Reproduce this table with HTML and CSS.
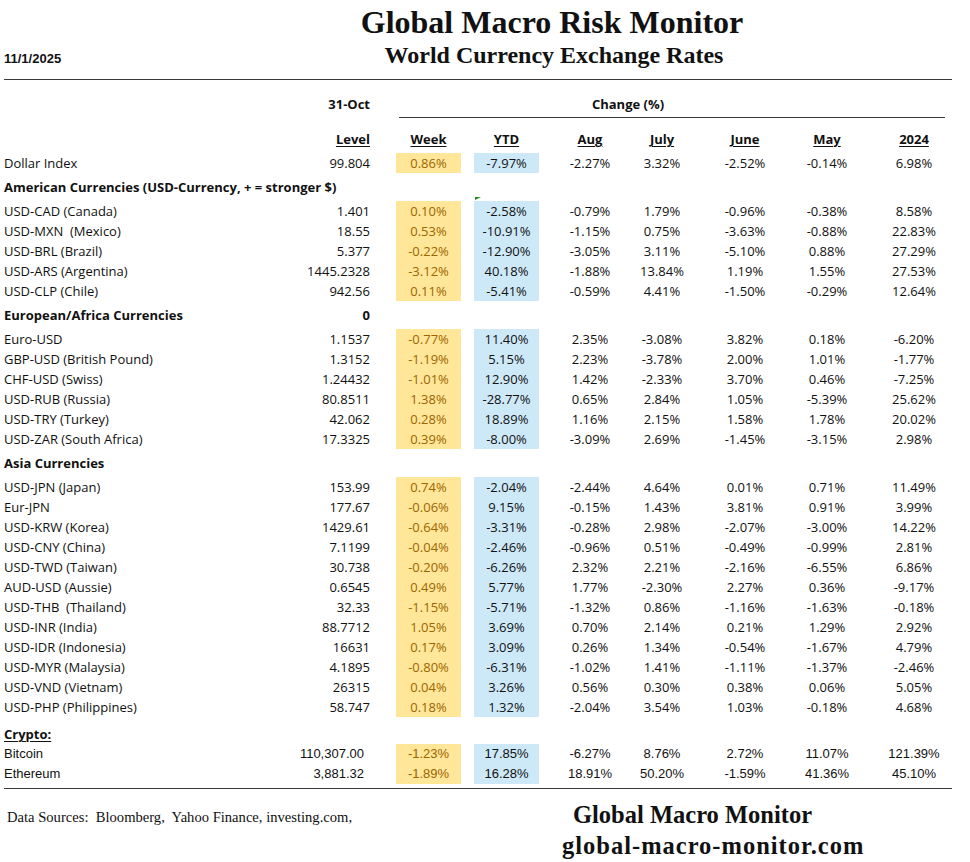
FILE: index.html
```html
<!DOCTYPE html>
<html>
<head>
<meta charset="utf-8">
<link rel="stylesheet" href="styles.css">
</head>
<body>
<div class="page">
  <header class="top">
    <div class="date">11/1/2025</div>
    <div class="titles">
      <h1 class="title">Global Macro Risk Monitor</h1>
      <h2 class="subtitle">World Currency Exchange Rates</h2>
    </div>
  </header>

  <section class="tbl">
    <div class="row head1">
      <div class="lvl b">31-Oct</div>
      <div class="change b">Change (%)</div>
      <div class="change-rule"></div>
    </div>
    <div class="row head2">
      <div class="lvl b u">Level</div>
      <div class="wk plain b u">Week</div>
      <div class="ytd plain b u">YTD</div>
      <div class="m1 b u">Aug</div>
      <div class="m2 b u">July</div>
      <div class="m3 b u">June</div>
      <div class="m4 b u">May</div>
      <div class="m5 b u">2024</div>
    </div>

    <div class="row"><div class="lbl">Dollar Index</div><div class="lvl">99.804</div><div class="wk">0.86%</div><div class="ytd">-7.97%</div><div class="m1">-2.27%</div><div class="m2">3.32%</div><div class="m3">-2.52%</div><div class="m4">-0.14%</div><div class="m5">6.98%</div></div>

    <div class="row sect"><div class="lbl b">American Currencies (USD-Currency, + = stronger $)</div></div>
    <div class="row"><div class="lbl">USD-CAD (Canada)</div><div class="lvl">1.401</div><div class="wk">0.10%</div><div class="ytd flagged">-2.58%<span class="err-flag"></span></div><div class="m1">-0.79%</div><div class="m2">1.79%</div><div class="m3">-0.96%</div><div class="m4">-0.38%</div><div class="m5">8.58%</div></div>
    <div class="row"><div class="lbl">USD-MXN&nbsp; (Mexico)</div><div class="lvl">18.55</div><div class="wk">0.53%</div><div class="ytd">-10.91%</div><div class="m1">-1.15%</div><div class="m2">0.75%</div><div class="m3">-3.63%</div><div class="m4">-0.88%</div><div class="m5">22.83%</div></div>
    <div class="row"><div class="lbl">USD-BRL (Brazil)</div><div class="lvl">5.377</div><div class="wk">-0.22%</div><div class="ytd">-12.90%</div><div class="m1">-3.05%</div><div class="m2">3.11%</div><div class="m3">-5.10%</div><div class="m4">0.88%</div><div class="m5">27.29%</div></div>
    <div class="row"><div class="lbl">USD-ARS (Argentina)</div><div class="lvl">1445.2328</div><div class="wk">-3.12%</div><div class="ytd">40.18%</div><div class="m1">-1.88%</div><div class="m2">13.84%</div><div class="m3">1.19%</div><div class="m4">1.55%</div><div class="m5">27.53%</div></div>
    <div class="row"><div class="lbl">USD-CLP (Chile)</div><div class="lvl">942.56</div><div class="wk">0.11%</div><div class="ytd">-5.41%</div><div class="m1">-0.59%</div><div class="m2">4.41%</div><div class="m3">-1.50%</div><div class="m4">-0.29%</div><div class="m5">12.64%</div></div>

    <div class="row sect"><div class="lbl b">European/Africa Currencies</div><div class="lvl b">0</div></div>
    <div class="row"><div class="lbl">Euro-USD</div><div class="lvl">1.1537</div><div class="wk">-0.77%</div><div class="ytd">11.40%</div><div class="m1">2.35%</div><div class="m2">-3.08%</div><div class="m3">3.82%</div><div class="m4">0.18%</div><div class="m5">-6.20%</div></div>
    <div class="row"><div class="lbl">GBP-USD (British Pound)</div><div class="lvl">1.3152</div><div class="wk">-1.19%</div><div class="ytd">5.15%</div><div class="m1">2.23%</div><div class="m2">-3.78%</div><div class="m3">2.00%</div><div class="m4">1.01%</div><div class="m5">-1.77%</div></div>
    <div class="row"><div class="lbl">CHF-USD (Swiss)</div><div class="lvl">1.24432</div><div class="wk">-1.01%</div><div class="ytd">12.90%</div><div class="m1">1.42%</div><div class="m2">-2.33%</div><div class="m3">3.70%</div><div class="m4">0.46%</div><div class="m5">-7.25%</div></div>
    <div class="row"><div class="lbl">USD-RUB (Russia)</div><div class="lvl">80.8511</div><div class="wk">1.38%</div><div class="ytd">-28.77%</div><div class="m1">0.65%</div><div class="m2">2.84%</div><div class="m3">1.05%</div><div class="m4">-5.39%</div><div class="m5">25.62%</div></div>
    <div class="row"><div class="lbl">USD-TRY (Turkey)</div><div class="lvl">42.062</div><div class="wk">0.28%</div><div class="ytd">18.89%</div><div class="m1">1.16%</div><div class="m2">2.15%</div><div class="m3">1.58%</div><div class="m4">1.78%</div><div class="m5">20.02%</div></div>
    <div class="row"><div class="lbl">USD-ZAR (South Africa)</div><div class="lvl">17.3325</div><div class="wk">0.39%</div><div class="ytd">-8.00%</div><div class="m1">-3.09%</div><div class="m2">2.69%</div><div class="m3">-1.45%</div><div class="m4">-3.15%</div><div class="m5">2.98%</div></div>

    <div class="row sect"><div class="lbl b">Asia Currencies</div></div>
    <div class="row"><div class="lbl">USD-JPN (Japan)</div><div class="lvl">153.99</div><div class="wk">0.74%</div><div class="ytd">-2.04%</div><div class="m1">-2.44%</div><div class="m2">4.64%</div><div class="m3">0.01%</div><div class="m4">0.71%</div><div class="m5">11.49%</div></div>
    <div class="row"><div class="lbl">Eur-JPN</div><div class="lvl">177.67</div><div class="wk">-0.06%</div><div class="ytd">9.15%</div><div class="m1">-0.15%</div><div class="m2">1.43%</div><div class="m3">3.81%</div><div class="m4">0.91%</div><div class="m5">3.99%</div></div>
    <div class="row"><div class="lbl">USD-KRW (Korea)</div><div class="lvl">1429.61</div><div class="wk">-0.64%</div><div class="ytd">-3.31%</div><div class="m1">-0.28%</div><div class="m2">2.98%</div><div class="m3">-2.07%</div><div class="m4">-3.00%</div><div class="m5">14.22%</div></div>
    <div class="row"><div class="lbl">USD-CNY (China)</div><div class="lvl">7.1199</div><div class="wk">-0.04%</div><div class="ytd">-2.46%</div><div class="m1">-0.96%</div><div class="m2">0.51%</div><div class="m3">-0.49%</div><div class="m4">-0.99%</div><div class="m5">2.81%</div></div>
    <div class="row"><div class="lbl">USD-TWD (Taiwan)</div><div class="lvl">30.738</div><div class="wk">-0.20%</div><div class="ytd">-6.26%</div><div class="m1">2.32%</div><div class="m2">2.21%</div><div class="m3">-2.16%</div><div class="m4">-6.55%</div><div class="m5">6.86%</div></div>
    <div class="row"><div class="lbl">AUD-USD (Aussie)</div><div class="lvl">0.6545</div><div class="wk">0.49%</div><div class="ytd">5.77%</div><div class="m1">1.77%</div><div class="m2">-2.30%</div><div class="m3">2.27%</div><div class="m4">0.36%</div><div class="m5">-9.17%</div></div>
    <div class="row"><div class="lbl">USD-THB&nbsp; (Thailand)</div><div class="lvl">32.33</div><div class="wk">-1.15%</div><div class="ytd">-5.71%</div><div class="m1">-1.32%</div><div class="m2">0.86%</div><div class="m3">-1.16%</div><div class="m4">-1.63%</div><div class="m5">-0.18%</div></div>
    <div class="row"><div class="lbl">USD-INR (India)</div><div class="lvl">88.7712</div><div class="wk">1.05%</div><div class="ytd">3.69%</div><div class="m1">0.70%</div><div class="m2">2.14%</div><div class="m3">0.21%</div><div class="m4">1.29%</div><div class="m5">2.92%</div></div>
    <div class="row"><div class="lbl">USD-IDR (Indonesia)</div><div class="lvl">16631</div><div class="wk">0.17%</div><div class="ytd">3.09%</div><div class="m1">0.26%</div><div class="m2">1.34%</div><div class="m3">-0.54%</div><div class="m4">-1.67%</div><div class="m5">4.79%</div></div>
    <div class="row"><div class="lbl">USD-MYR (Malaysia)</div><div class="lvl">4.1895</div><div class="wk">-0.80%</div><div class="ytd">-6.31%</div><div class="m1">-1.02%</div><div class="m2">1.41%</div><div class="m3">-1.11%</div><div class="m4">-1.37%</div><div class="m5">-2.46%</div></div>
    <div class="row"><div class="lbl">USD-VND (Vietnam)</div><div class="lvl">26315</div><div class="wk">0.04%</div><div class="ytd">3.26%</div><div class="m1">0.56%</div><div class="m2">0.30%</div><div class="m3">0.38%</div><div class="m4">0.06%</div><div class="m5">5.05%</div></div>
    <div class="row"><div class="lbl">USD-PHP (Philippines)</div><div class="lvl">58.747</div><div class="wk">0.18%</div><div class="ytd">1.32%</div><div class="m1">-2.04%</div><div class="m2">3.54%</div><div class="m3">1.03%</div><div class="m4">-0.18%</div><div class="m5">4.68%</div></div>

    <div class="row sect crypto-head"><div class="lbl b u">Crypto:</div></div>
    <div class="row crypto"><div class="lbl">Bitcoin</div><div class="lvl">110,307.00</div><div class="wk">-1.23%</div><div class="ytd">17.85%</div><div class="m1">-6.27%</div><div class="m2">8.76%</div><div class="m3">2.72%</div><div class="m4">11.07%</div><div class="m5">121.39%</div></div>
    <div class="row crypto"><div class="lbl">Ethereum</div><div class="lvl">3,881.32</div><div class="wk">-1.89%</div><div class="ytd">16.28%</div><div class="m1">18.91%</div><div class="m2">50.20%</div><div class="m3">-1.59%</div><div class="m4">41.36%</div><div class="m5">45.10%</div></div>
  </section>

  <footer class="foot">
    <div class="sources">Data Sources:&nbsp; Bloomberg,&nbsp; Yahoo Finance, investing.com,</div>
    <div class="brand">
      <div class="brand-name">Global Macro Monitor</div>
      <div class="brand-url">global-macro-monitor.com</div>
    </div>
  </footer>
</div>
</body>
</html>
```

FILE: styles.css
```css
* { box-sizing: border-box; }
html, body { margin: 0; padding: 0; background: #fff; }
body { color: #111; }

.page { width: 970px; padding: 0 0 0 4px; }

/* Header */
.top {
  display: grid;
  grid-template-columns: 126px 1fr;
  align-items: end;
  padding-top: 4px;
  width: 948px;
  padding-bottom: 10px;
  border-bottom: 1px solid #3a3a3a;
}
.date {
  font-family: "Liberation Sans", Arial, sans-serif;
  font-weight: bold;
  font-size: 13px;
  line-height: 16px;
  align-self: end;
  margin-bottom: 2px;
}
.titles { text-align: center; width: 844px; }
.title {
  margin: 0;
  font-family: "Liberation Serif", "Times New Roman", serif;
  font-weight: bold;
  font-size: 32px;
  line-height: 36px;
}
.subtitle {
  margin: 1px 0 0;
  font-family: "Liberation Serif", "Times New Roman", serif;
  font-weight: bold;
  font-size: 24px;
  line-height: 28px;
  padding-left: 4px;
}

/* Table */
.tbl {
  font-family: "Open Sans", "Noto Sans", Arial, sans-serif;
  font-size: 13px;
  padding-top: 14px;
}
.row {
  display: grid;
  grid-template-columns: 296px 70px 26px 65px 13px 65px 18px 66px 6px 66px 17px 66px 16px 66px 21px 66px;
  height: 20px;
  align-items: stretch;
}
.row > div {
  display: flex;
  align-items: center;
  white-space: nowrap;
  line-height: 20px;
}
.lbl { grid-column: 1; justify-content: flex-start; }
.lvl { grid-column: 2; justify-content: flex-end; }
.wk  { grid-column: 4; justify-content: center; background: #ffe699; color: #9c6500; }
.ytd { grid-column: 6; justify-content: center; background: #cde9f8; }
.m1  { grid-column: 8; justify-content: center; }
.m2  { grid-column: 10; justify-content: center; }
.m3  { grid-column: 12; justify-content: center; }
.m4  { grid-column: 14; justify-content: center; }
.m5  { grid-column: 16; justify-content: center; }

.b { font-weight: bold; }
.u { text-decoration: underline; text-decoration-thickness: 1px; text-underline-offset: 2px; }

.head1 {
  grid-template-rows: 20px 4px;
  height: 24px;
}
.head1 .lvl { grid-row: 1; }
.change { grid-row: 1; grid-column: 4 / 15; justify-content: center; }
.change-rule {
  grid-row: 2;
  grid-column: 4 / 17;
  border-bottom: 1px solid #3a3a3a;
  margin-left: 3px;
  margin-right: 2px;
}
.head2 { margin-top: 11px; margin-bottom: 4px; }
.head2 .plain { background: none; color: #111; }

.sect { height: 28px; }
.crypto-head { height: 27px; }
.crypto-head > div { align-items: flex-end; }

.flagged { position: relative; }
.err-flag {
  position: absolute;
  left: 1px;
  top: -4px;
  width: 6px;
  height: 3px;
  background: #1c8a1c;
  clip-path: polygon(0 0, 100% 0, 0 100%);
}

.crypto > div { font-family: "Liberation Sans", Arial, sans-serif; }
.crypto .lvl { padding-right: 6px; }

/* Footer */
.foot {
  width: 948px;
  border-top: 1px solid #3a3a3a;
  margin-top: 4px;
  display: grid;
  grid-template-columns: 558px 1fr;
  padding-top: 14px;
  height: 74px;
}
.sources {
  font-family: "Liberation Serif", "Times New Roman", serif;
  font-size: 14.6px;
  padding-left: 3px;
  padding-top: 5px;
  line-height: 18px;
}
.brand {
  font-family: "Liberation Serif", "Times New Roman", serif;
  font-weight: bold;
  font-size: 24.5px;
}
.brand-name { padding-left: 11px; line-height: 24px; }
.brand-url { line-height: 32px; margin-top: 3px; letter-spacing: 1px; }
```
